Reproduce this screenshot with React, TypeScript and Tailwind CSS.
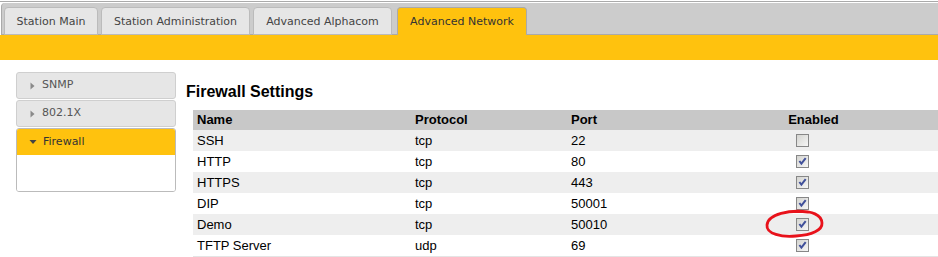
const tabs = [
  { label: "Station Main", w: "w-[94px]" },
  { label: "Station Administration", w: "w-[149px]" },
  { label: "Advanced Alphacom", w: "w-[139px]" },
]

const rules = [
  { name: "SSH", proto: "tcp", port: "22", on: false },
  { name: "HTTP", proto: "tcp", port: "80", on: true },
  { name: "HTTPS", proto: "tcp", port: "443", on: true },
  { name: "DIP", proto: "tcp", port: "50001", on: true },
  { name: "Demo", proto: "tcp", port: "50010", on: true },
  { name: "TFTP Server", proto: "udp", port: "69", on: true },
]

const CheckBox = ({ checked }: { checked: boolean }) => (
  <svg width="13" height="13" viewBox="0 0 13 13" className="block">
    <defs>
      <linearGradient id="cbg" x1="0" y1="0" x2="1" y2="1">
        <stop offset="0" stopColor="#d2d2ce" />
        <stop offset="1" stopColor="#f8f8f8" />
      </linearGradient>
    </defs>
    <rect x="0.5" y="0.5" width="12" height="12" fill="url(#cbg)" stroke="#878787" />
    {checked && (
      <path
        d="M3.4 6 L5.4 8.6 L9.7 3.2"
        fill="none"
        stroke="#40509a"
        strokeWidth="2"
      />
    )}
  </svg>
)

const Arrow = ({ open }: { open?: boolean }) =>
  open ? (
    <svg width="8" height="6" viewBox="0 0 8 6" className="mr-[6px]">
      <path d="M0.5 1 L7.5 1 L4 5 Z" fill="#444" />
    </svg>
  ) : (
    <svg width="5" height="8" viewBox="0 0 5 8" className="mr-[7px]">
      <path d="M0.5 0.5 L4.5 4 L0.5 7.5 Z" fill="#8a8a8a" />
    </svg>
  )

export default function App() {
  return (
    <div className="relative w-[938px] h-[257px] overflow-hidden bg-white font-['Liberation_Sans',Arial,sans-serif]">
      {/* top tab bar */}
      <div className="pt-px">
        <div className="h-px bg-[#aaa]" />
        <div className="h-px" />
        <div className="flex items-end h-[32px] pl-[2px] gap-[3px] bg-[#ccc] border-b border-l border-[#aaa] rounded-tl-[4px] ml-px">
          {tabs.map((t) => (
            <div
              key={t.label}
              className={`${t.w} h-[28px] -mb-px flex items-center justify-center pt-[2px] bg-[#e6e6e6] border border-[#bbb] rounded-t-[4px] text-[11px] text-[#444] font-['DejaVu_Sans',sans-serif]`}
            >
              {t.label}
            </div>
          ))}
          <div className="w-[130px] ml-[2px] h-[28px] -mb-px flex items-center justify-center pt-[2px] bg-[#ffc20e] border border-b-0 border-[#aaa] rounded-t-[4px] text-[11px] text-[#333] font-['DejaVu_Sans',sans-serif]">
            Advanced Network
          </div>
        </div>
        <div className="h-[25px] bg-[#ffc20e]" />
      </div>

      <div className="flex">
        {/* side menu */}
        <div className="ml-[16px] mt-[12px] w-[160px] flex flex-col gap-[1px] font-['DejaVu_Sans',sans-serif] text-[11px]">
          <div className="h-[27px] flex items-center pl-[13px] bg-[#e6e6e6] border border-[#cfcfcf] rounded-[3px] text-[#555]">
            <Arrow />
            SNMP
          </div>
          <div className="h-[27px] flex items-center pl-[13px] bg-[#e6e6e6] border border-[#cfcfcf] rounded-[3px] text-[#555]">
            <Arrow />
            802.1X
          </div>
          <div className="border border-[#bbb] rounded-[3px] overflow-hidden">
            <div className="h-[26px] flex items-center pl-[12px] bg-[#ffc20e] text-[#333]">
              <Arrow open />
              Firewall
            </div>
            <div className="h-[36px] bg-white" />
          </div>
        </div>

        {/* firewall table */}
        <div className="flex-1 ml-[10px] mt-[23px]">
          <h2 className="h-[18px] leading-[18px] text-[16px] font-bold text-black">
            Firewall Settings
          </h2>
          <div className="mt-[9px] ml-[7px] text-[13px] text-black">
            <div className="grid grid-cols-[218px_156px_200px_93px_1fr] h-[20px] items-center bg-[#c8c8c8] font-bold">
              <div className="pl-[4px]">Name</div>
              <div className="pl-[4px]">Protocol</div>
              <div className="pl-[4px]">Port</div>
              <div className="text-center">Enabled</div>
              <div />
            </div>
            {rules.map((r, i) => (
              <div
                key={r.name}
                className={`grid grid-cols-[218px_156px_200px_93px_1fr] h-[21px] items-center ${
                  i % 2 === 0 ? "bg-[#eee]" : "bg-white"
                }`}
              >
                <div className="pl-[4px]">{r.name}</div>
                <div className="pl-[4px]">{r.proto}</div>
                <div className="pl-[4px]">{r.port}</div>
                <div className="pl-[29px]">
                  <CheckBox checked={r.on} />
                </div>
                <div />
              </div>
            ))}
            <div className="h-px bg-[#e4e4e4]" />
          </div>
        </div>
      </div>

      {/* red marker around the Demo checkbox */}
      <svg
        className="absolute left-[760px] top-[200px] pointer-events-none"
        width="70"
        height="45"
        viewBox="0 0 70 45"
      >
        <path
          d="M48 12 C30 9.5, 8 14, 7 25 C6 34, 22 37.5, 36 36 C52 35, 62.5 30, 62 23 C61.5 15, 52 10.5, 37 11.5"
          fill="none"
          stroke="#e8121b"
          strokeWidth="2.8"
          strokeLinecap="round"
        />
      </svg>
    </div>
  )
}
